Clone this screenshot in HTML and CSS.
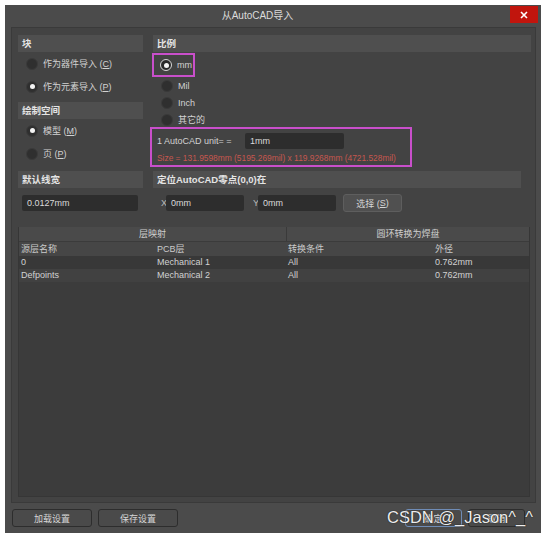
FILE: index.html
```html
<!DOCTYPE html>
<html lang="zh">
<head>
<meta charset="utf-8">
<title>从AutoCAD导入</title>
<link rel="stylesheet" href="styles.css">
</head>
<body>
<div class="window">
  <div class="titlebar">
    <div class="title">从AutoCAD导入</div>
    <div class="close">
      <svg width="8" height="8" viewBox="0 0 8 8"><path d="M1 1 L7 7 M7 1 L1 7" stroke="#fff" stroke-width="1.6" fill="none"/></svg>
    </div>
  </div>
  <div class="frame">
    <div class="grid top">
      <div class="col">
        <div class="hdr">块</div>
        <div class="radio"><span class="dot"></span>作为器件导入 (<u>C</u>)</div>
        <div class="radio"><span class="dot on"></span>作为元素导入 (<u>P</u>)</div>
        <div class="hdr second">绘制空间</div>
        <div class="radio"><span class="dot on"></span>模型 (<u>M</u>)</div>
        <div class="radio"><span class="dot"></span>页 (<u>P</u>)</div>
      </div>
      <div class="col">
        <div class="hdr">比例</div>
        <div class="hl mmbox"><span class="dot sel"></span>mm</div>
        <div class="radio small"><span class="dot"></span>Mil</div>
        <div class="radio small"><span class="dot"></span>Inch</div>
        <div class="radio small"><span class="dot"></span>其它的</div>
        <div class="hl unitbox">
          <div class="unitrow"><span class="unitlbl">1 AutoCAD unit= =</span><span class="input unitin">1mm</span></div>
          <div class="size">Size = 131.9598mm (5195.269mil) x 119.9268mm (4721.528mil)</div>
        </div>
      </div>
    </div>
    <div class="grid mid">
      <div class="col">
        <div class="hdr">默认线宽</div>
        <div class="input width">0.0127mm</div>
      </div>
      <div class="col">
        <div class="hdr origin">定位AutoCAD零点(0,0)在</div>
        <div class="xyrow">
          <span class="axis">X</span><span class="input coord">0mm</span>
          <span class="axis y">Y</span><span class="input coord">0mm</span>
          <span class="btn pick">选择 (<u>S</u>)</span>
        </div>
      </div>
    </div>
    <div class="table">
      <div class="band">
        <div class="group">层映射</div>
        <div class="group right">圆环转换为焊盘</div>
      </div>
      <div class="trow head">
        <div>源层名称</div><div>PCB层</div><div>转换条件</div><div>外径</div>
      </div>
      <div class="trow odd">
        <div>0</div><div>Mechanical 1</div><div>All</div><div>0.762mm</div>
      </div>
      <div class="trow even">
        <div>Defpoints</div><div>Mechanical 2</div><div>All</div><div>0.762mm</div>
      </div>
    </div>
  </div>
  <div class="footer">
    <span class="btn fbtn">加载设置</span>
    <span class="btn fbtn">保存设置</span>
    <span class="spacer"></span>
    <span class="btn fbtn ok">确定</span>
    <span class="btn fbtn cancel">取消</span>
  </div>
  <div class="watermark">CSDN @_Jason^_^</div>
</div>
</body>
</html>
```
FILE: styles.css
```css
html, body {
  margin: 0;
  padding: 0;
  background: #ffffff;
}
body {
  font-family: "Liberation Sans", "Noto Sans CJK SC", sans-serif;
  font-size: 9px;
  color: #d2d2d2;
}
.window {
  position: relative;
  margin: 5px 0 0 5px;
  width: 536px;
  height: 528px;
  background: #4b4b4b;
  display: flex;
  flex-direction: column;
}
.titlebar {
  height: 22px;
  display: flex;
  flex: none;
}
.title {
  flex: 1;
  text-align: center;
  line-height: 22px;
  font-size: 10px;
  color: #dcdcdc;
}
.close {
  width: 28px;
  height: 17px;
  margin: 1px 3px 0 0;
  background: #c1150d;
  display: flex;
  align-items: center;
  justify-content: center;
}
.frame {
  flex: none;
  box-sizing: border-box;
  width: 525px;
  height: 476px;
  margin-left: 6px;
  background: #434343;
  border: 1px solid #3a3a3a;
  padding: 7px 0 0 6px;
}
.grid {
  display: grid;
  grid-template-columns: 125px 378px;
  column-gap: 10px;
}
.col {
  display: flex;
  flex-direction: column;
  min-width: 0;
}
.hdr {
  height: 17px;
  line-height: 17px;
  background: #4f4f4f;
  padding-left: 4px;
  font-weight: bold;
  color: #e4e4e4;
  font-size: 9.5px;
}
.hdr.second {
  margin-top: 4px;
}
.radio {
  height: 23px;
  display: flex;
  align-items: center;
  padding-left: 8px;
}
.radio.small {
  height: 17px;
  padding-left: 8px;
}
.dot {
  width: 12px;
  height: 12px;
  box-sizing: border-box;
  border-radius: 50%;
  background: #2f2f2f;
  border: 1px solid #3a3a3a;
  margin-right: 5px;
  flex: none;
  display: flex;
  align-items: center;
  justify-content: center;
}
.dot.on::after, .dot.sel::after {
  content: "";
  width: 5px;
  height: 5px;
  border-radius: 50%;
  background: #f4f4f4;
}
.dot.sel {
  border: 1.5px solid #d8d8d8;
  background: #2a2a2a;
}
.hl {
  box-sizing: border-box;
  border: 2px solid #c94fcb;
}
.mmbox {
  margin: 1px 0 0 -1px;
  width: 43px;
  height: 24px;
  display: flex;
  align-items: center;
  padding-left: 6px;
}
.unitbox {
  margin: -1px 0 0 -3px;
  width: 262px;
  height: 40px;
  padding: 4px 0 0 5px;
}
.unitrow {
  display: flex;
  align-items: center;
  height: 16px;
}
.unitlbl {
  width: 88px;
  flex: none;
}
.input {
  box-sizing: border-box;
  height: 16px;
  line-height: 16px;
  background: #2d2d2d;
  border-radius: 2px;
  padding-left: 5px;
  color: #dadada;
  display: block;
}
.unitin {
  width: 99px;
}
.size {
  margin-top: 2px;
  height: 14px;
  line-height: 14px;
  font-size: 8.4px;
  color: #c7574f;
  white-space: nowrap;
}
.mid {
  margin-top: 4px;
}
.input.width {
  margin: 7px 0 0 4px;
  width: 116px;
}
.hdr.origin {
  width: 368px;
  box-sizing: border-box;
}
.xyrow {
  margin-top: 7px;
  height: 16px;
  display: flex;
  align-items: center;
  padding-left: 8px;
}
.axis {
  width: 5px;
  flex: none;
  color: #bdbdbd;
}
.axis.y {
  margin-left: 9px;
}
.coord {
  width: 78px;
  flex: none;
}
.btn {
  box-sizing: border-box;
  display: flex;
  align-items: center;
  justify-content: center;
  height: 18px;
  background: #4a4a4a;
  border: 1px solid #2d2d2d;
  border-radius: 3px;
  color: #d6d6d6;
  flex: none;
}
.pick {
  margin-left: 7px;
  width: 59px;
  background: #505050;
  border-color: #5e5e5e;
}
.table {
  margin-top: 16px;
  width: 512px;
  height: 270px;
  box-sizing: border-box;
  background: #3c3c3c;
  border: 1px solid #363636;
  border-top: none;
}
.band {
  display: grid;
  grid-template-columns: 267px 1fr;
  height: 14px;
  line-height: 14px;
  background: #4a4a4a;
  color: #cfcfcf;
}
.group {
  text-align: center;
}
.group.right {
  border-left: 1px solid #3a3a3a;
}
.trow {
  display: grid;
  grid-template-columns: 136px 131px 147px 1fr;
  height: 13px;
  line-height: 13px;
}
.trow > div {
  padding-left: 2px;
  white-space: nowrap;
}
.trow.head {
  height: 15px;
  line-height: 14px;
  background: #464646;
  border-top: 1px solid #3b3b3b;
  box-sizing: border-box;
  color: #cacaca;
}
.trow.odd {
  background: #383838;
}
.trow.even {
  background: #414141;
}
.footer {
  flex: 1;
  display: flex;
  align-items: flex-start;
  padding: 6px 0 0 7px;
}
.fbtn {
  width: 80px;
  margin-right: 6px;
  height: 18px;
}
.spacer {
  flex: 1;
}
.ok {
  width: 57px;
  border-color: #6f8cb6;
  margin-right: 6px;
}
.cancel {
  width: 57px;
  margin-right: 16px;
}
.watermark {
  position: absolute;
  left: 382px;
  top: 502px;
  font-family: "Liberation Sans", sans-serif;
  font-size: 16.5px;
  line-height: 20px;
  color: #ececec;
  text-shadow: 0 0 1px #222, 0 0 1px #222;
  white-space: nowrap;
}
```
